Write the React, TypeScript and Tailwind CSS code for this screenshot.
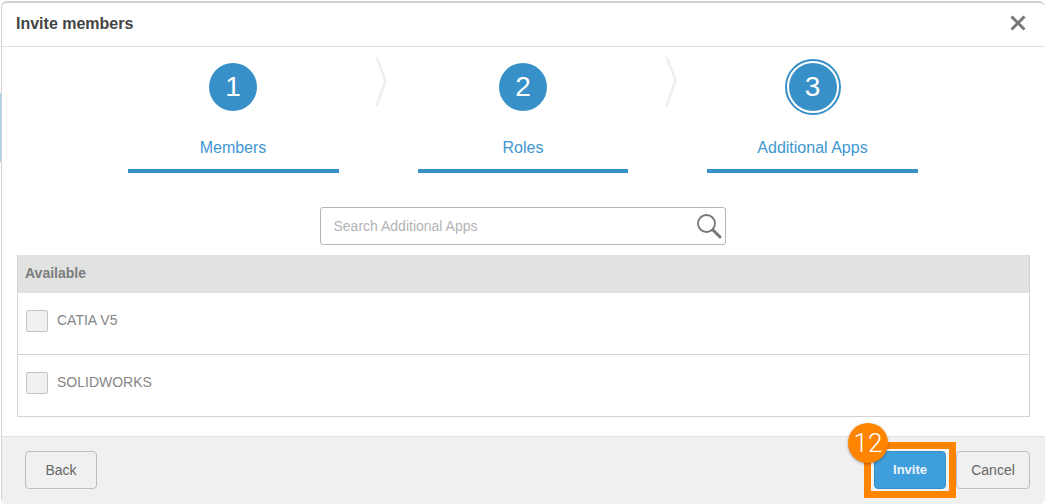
import React from "react";

function Chevron() {
  return (
    <svg width="13" height="52" viewBox="0 0 13 52" className="mt-[9px] shrink-0" fill="none">
      <path d="M1.5 1 L10.5 24.5 L1.5 50" stroke="#efefef" strokeWidth="2.6" />
    </svg>
  );
}

function Step({ n, label, active, narrow, first }: { n: number; label: string; active?: boolean; narrow?: boolean; first?: boolean }) {
  return (
    <div className={(narrow ? "w-[210px]" : "w-[211px]") + " shrink-0 flex flex-col items-center"}>
      <div className={(first ? "pr-[1px] " : "") + "h-[64px] mt-[8px] flex items-center justify-center"}>
        <div
          className={
            active
              ? "w-[56px] h-[56px] rounded-full border-2 border-[#3890c8] p-[2px]"
              : "w-[48px] h-[48px] rounded-full"
          }
        >
          <div className="w-full h-full rounded-full bg-[#3890c8] text-white text-[28px] leading-none flex items-center justify-center">
            {n}
          </div>
        </div>
      </div>
      <div className={(first ? "pr-[1px] " : "") + "mt-[18px] h-[22px] text-[16px] leading-[22px] text-[#3f97d0]"}>{label}</div>
      <div className="mt-[10px] w-full h-[4px] bg-[#3890c8]" />
    </div>
  );
}

function Row({ label, last }: { label: string; last?: boolean }) {
  return (
    <div className={(last ? "h-[61px]" : "h-[62px] border-b border-[#d4d4d4]") + " flex items-start pl-[8px] pt-[17px]"}>
      <div className="w-[22px] h-[22px] rounded-[2px] border border-[#c4c4c4] bg-[#f0f0f0]" />
      <span className="ml-[9px] -mt-[1px] text-[14px] leading-[22px] text-[#868686]">{label}</span>
    </div>
  );
}

export default function App() {
  return (
    <div className="w-[1045px] h-[504px] bg-white overflow-hidden relative font-['Liberation_Sans',Arial,sans-serif]">
      <div className="absolute left-0 top-[93px] w-[2px] h-[69px] bg-[#a9d3ee]" />
      <div className="absolute left-[1px] top-[1px] w-[1044px] h-[503px] flex flex-col rounded-[6px] border-t-2 border-l border-[#d2d2d2] bg-white overflow-hidden">
        <div className="h-[44px] shrink-0 border-b border-[#e0e0e0] flex items-center justify-between pl-[14px] pr-[19px] pb-[2px]">
          <span className="text-[16px] font-bold text-[#444444]">Invite members</span>
          <svg className="mb-[2px]" width="16" height="16" viewBox="0 0 16 16" fill="none">
            <path d="M1.5 1.5 L14.5 14.5 M14.5 1.5 L1.5 14.5" stroke="#777777" strokeWidth="3" />
          </svg>
        </div>

        <div className="flex-1 flex flex-col">
          <div className="flex justify-center items-start pr-[1px]">
            <Step n={1} label="Members" first />
            <div className="w-[79px] pl-[36px]"><Chevron /></div>
            <Step n={2} label="Roles" narrow />
            <div className="w-[79px] pl-[37px]"><Chevron /></div>
            <Step n={3} label="Additional Apps" active />
          </div>

          <div className="mt-[34px] flex justify-center pr-[2px]">
            <div className="relative w-[406px] h-[38px] rounded-[3px] border border-[#b5b5b5] flex items-center pl-[13px]">
              <span className="text-[14px] text-[#b4b4b4]">Search Additional Apps</span>
              <svg className="absolute right-[3px] top-[5px]" width="26" height="26" viewBox="0 0 26 26" fill="none">
                <circle cx="10.5" cy="10.5" r="8.5" stroke="#777777" strokeWidth="1.8" />
                <path d="M17 17 L24 24" stroke="#777777" strokeWidth="3" strokeLinecap="round" />
              </svg>
            </div>
          </div>

          <div className="mt-[10px] ml-[15px] w-[1013px] border border-[#d4d4d4] border-t-0">
            <div className="h-[38px] bg-[#e1e3e0] flex items-center pl-[7px] pb-[2px] text-[14px] font-bold text-[#7b7d7e]">Available</div>
            <Row label="CATIA V5" />
            <Row label="SOLIDWORKS" last />
          </div>
        </div>

        <div className="h-[68px] shrink-0 border-t border-[#e2e2e2] bg-[#f0f0f0] flex items-start justify-between pl-[23px] pr-[15px] pt-[14px]">
          <button className="w-[72px] h-[38px] rounded-[4px] border border-[#bdbdbd] text-[14px] text-[#666666]">Back</button>
          <div className="flex items-start">
            <div className="relative -mt-[9px] w-[92px] h-[56px] border-[7px] border-[#ff8400] p-[2px] bg-[#f4f4f4]">
              <button className="ml-[1px] w-[72px] h-[38px] rounded-[4px] border border-[#3890c8] bg-[#3f9fdc] text-[13px] font-bold text-white/90">Invite</button>
              <div className="absolute -left-[23px] -top-[26px] w-[40px] h-[40px] rounded-full bg-[#ff8400] shadow-[0_1px_3px_rgba(0,0,0,0.35)] text-white font-['Roboto',sans-serif] font-light text-[26px] flex items-center justify-center leading-none">12</div>
            </div>
            <button className="w-[74px] h-[38px] rounded-[4px] border border-[#bdbdbd] text-[14px] text-[#666666]">Cancel</button>
          </div>
        </div>
      </div>
    </div>
  );
}
